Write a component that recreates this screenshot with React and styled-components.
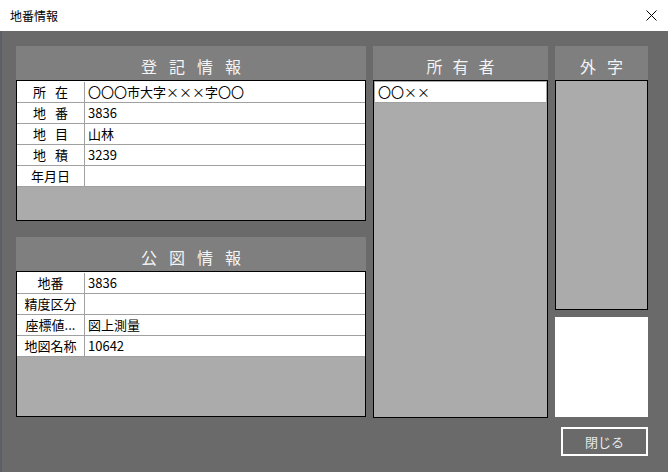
import React from "react";
import styled, { createGlobalStyle } from "styled-components";

const GlobalStyle = createGlobalStyle`
  html, body {
    margin: 0;
    padding: 0;
    width: 668px;
    height: 472px;
    overflow: hidden;
  }
  body {
    font-family: "Noto Sans CJK JP", "Noto Sans", sans-serif;
  }
`;

const Window = styled.div`
  width: 668px;
  height: 472px;
  display: flex;
  flex-direction: column;
  background: #6a6a6a;
`;

const TitleBar = styled.div`
  height: 31px;
  flex: none;
  background: #ffffff;
  display: flex;
  align-items: center;
  justify-content: space-between;
  padding: 0 11px 0 10px;
  font-size: 12px;
  color: #000;
`;

const CloseIcon = styled.svg`
  width: 11px;
  height: 11px;
  display: block;
`;

const Content = styled.div`
  flex: 1;
  border-left: 2px solid #5c5f66;
  padding: 15px 20px 0 14px;
  display: grid;
  grid-template-columns: 350px 175px 93px;
  grid-template-rows: 372px auto;
  column-gap: 7px;
`;

const Column = styled.div`
  display: flex;
  flex-direction: column;
  gap: ${(p) => p.$gap || 0}px;
`;

const Panel = styled.div`
  display: flex;
  flex-direction: column;
`;

const PanelHeader = styled.div`
  height: 34px;
  box-sizing: border-box;
  padding-top: 7px;
  padding-left: ${(p) => p.$spacing}px;
  background: #7f7f7f;
  color: #f4f4f4;
  font-size: 16px;
  line-height: 27px;
  letter-spacing: ${(p) => p.$spacing}px;
  text-align: center;
`;

const Box = styled.div`
  height: ${(p) => p.$h}px;
  box-sizing: border-box;
  border: 1px solid #000;
  background: #ababab;
  padding: ${(p) => p.$pad || 0}px;
  display: flex;
  flex-direction: column;
`;

const Row = styled.div`
  display: grid;
  grid-template-columns: 68px 1fr;
  height: 21px;
  box-sizing: border-box;
  background: #fff;
  border-bottom: 1px solid #a0a0a0;
  font-size: 13px;
  line-height: 20px;
  color: #000;
  &:first-child {
    height: 22px;
    padding-top: 1px;
  }
`;

const Label = styled.div`
  border-right: 1px solid #a0a0a0;
  text-align: center;
  letter-spacing: ${(p) => (p.$spaced ? "9px" : "0")};
  padding-left: ${(p) => (p.$spaced ? "9px" : "0")};
  white-space: nowrap;
  overflow: hidden;
`;

const Value = styled.div`
  padding-left: 3px;
  white-space: nowrap;
  overflow: hidden;
`;

const ListItem = styled.div`
  height: 21px;
  box-sizing: border-box;
  background: #fff;
  border-bottom: 1px solid #a0a0a0;
  padding-left: 3px;
  font-size: 13px;
  line-height: 20px;
  color: #000;
`;

const WhiteBox = styled.div`
  height: 100px;
  background: #fff;
`;

const Footer = styled.div`
  grid-column: 1 / -1;
  display: flex;
  justify-content: flex-end;
  padding-top: 9px;
`;

const Button = styled.button`
  width: 87px;
  height: 29px;
  box-sizing: border-box;
  border: 2px solid #fff;
  background: transparent;
  color: #e8e8e8;
  font-family: "Noto Sans CJK JP", "Noto Sans", sans-serif;
  font-size: 13px;
  padding: 0;
`;

const registry = [
  { label: "所在", value: "〇〇〇市大字×××字〇〇", spaced: true },
  { label: "地番", value: "3836", spaced: true },
  { label: "地目", value: "山林", spaced: true },
  { label: "地積", value: "3239", spaced: true },
  { label: "年月日", value: "" },
];

const koozu = [
  { label: "地番", value: "3836" },
  { label: "精度区分", value: "" },
  { label: "座標値...", value: "図上測量" },
  { label: "地図名称", value: "10642" },
];

function Table({ rows }) {
  return rows.map((r) => (
    <Row key={r.label}>
      <Label $spaced={r.spaced}>{r.label}</Label>
      <Value>{r.value}</Value>
    </Row>
  ));
}

export default function App() {
  return (
    <>
      <GlobalStyle />
      <Window>
        <TitleBar>
          <span>地番情報</span>
          <CloseIcon viewBox="0 0 11 11">
            <path d="M0.5 0.5 L10.5 10.5 M10.5 0.5 L0.5 10.5" stroke="#000" strokeWidth="1" />
          </CloseIcon>
        </TitleBar>
        <Content>
          <Column $gap={16}>
            <Panel>
              <PanelHeader $spacing={12}>登記情報</PanelHeader>
              <Box $h={141}>
                <Table rows={registry} />
              </Box>
            </Panel>
            <Panel>
              <PanelHeader $spacing={12}>公図情報</PanelHeader>
              <Box $h={146}>
                <Table rows={koozu} />
              </Box>
            </Panel>
          </Column>
          <Panel>
            <PanelHeader $spacing={10}>所有者</PanelHeader>
            <Box $h={338} $pad={1}>
              <ListItem>〇〇××</ListItem>
            </Box>
          </Panel>
          <Column $gap={7}>
            <Panel>
              <PanelHeader $spacing={11}>外字</PanelHeader>
              <Box $h={230} />
            </Panel>
            <WhiteBox />
          </Column>
          <Footer>
            <Button>閉じる</Button>
          </Footer>
        </Content>
      </Window>
    </>
  );
}
